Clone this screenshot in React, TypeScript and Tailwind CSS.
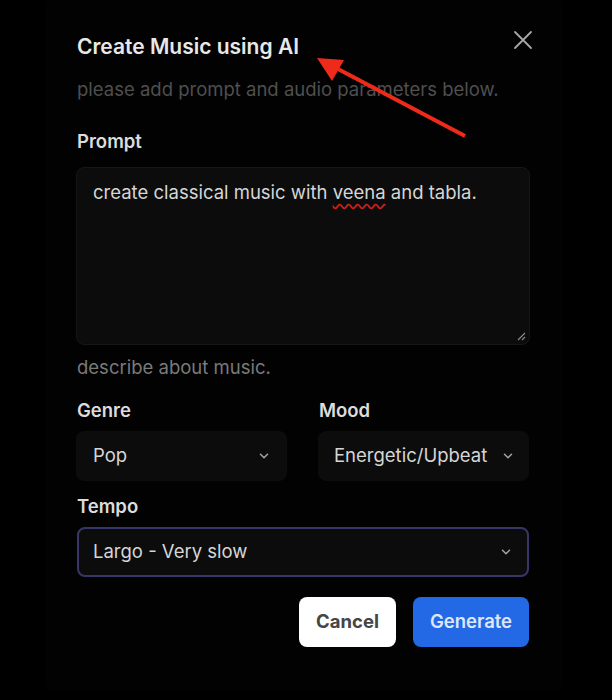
import React from "react";

function Chevron() {
  return (
    <svg width="14" height="14" viewBox="0 0 24 24" fill="none" stroke="#a3a3a3" strokeWidth="2.6" strokeLinecap="round" strokeLinejoin="round">
      <path d="M6 9l6 6 6-6" />
    </svg>
  );
}

function Select({ value, className }: { value: string; className?: string }) {
  return (
    <div className={"flex h-[50px] items-center justify-between rounded-lg bg-[#0c0c0c] text-[18.5px] text-[#d6d6d6] " + (className ?? "")}>
      <span className="whitespace-nowrap">{value}</span>
      <Chevron />
    </div>
  );
}

export default function App() {
  return (
    <div className="relative h-[700px] w-[612px] overflow-hidden bg-black" style={{ fontFamily: "Inter, 'Noto Sans', sans-serif" }}>
      <div className="relative ml-[45px] h-[690px] w-[518px] rounded-lg bg-[#020202] pl-[31px] pr-[32px] pt-[33px]">
        <button className="absolute right-[28px] top-[28px] text-[#a8a8a8]">
          <svg width="24" height="24" viewBox="0 0 24 24" fill="none" stroke="currentColor" strokeWidth="1.8" strokeLinecap="round">
            <path d="M4 4l16 16M20 4L4 20" />
          </svg>
        </button>
        <h2 className="pl-[1px] text-[21px] font-semibold leading-[28px] text-[#e8e8e8]">Create Music using AI</h2>
        <p className="mt-[16px] pl-[1px] text-[18.5px] leading-[24px] text-[#4f4f4f]">please add prompt and audio parameters below.</p>
        <div className="mt-[28px] pl-[1px] text-[18.5px] font-semibold leading-[24px] text-[#dcdcdc]">Prompt</div>
        <div className="relative mt-[14px] h-[178px] w-[454px] rounded-lg border border-[#161616] bg-[#0c0c0c] pl-[16px] pr-4 pt-[12px] text-[18.5px] leading-[24px] text-[#d6d6d6]">
          create classical music with{" "}
          <span className="underline decoration-wavy decoration-[#c81e1e] underline-offset-[4px]">veena</span> and tabla.
          <svg className="absolute bottom-[3px] right-[3px]" width="10" height="10" viewBox="0 0 10 10" stroke="#8a8a8a" strokeWidth="1.2">
            <path d="M9 2L2 9M9 6L6 9" />
          </svg>
        </div>
        <p className="mt-[10px] pl-[1px] text-[18.5px] leading-[24px] text-[#7a7a7a]">describe about music.</p>
        <div className="mt-[19px] grid w-[454px] grid-cols-[211px_211px] gap-x-[31px]">
          <div className="pl-[1px] text-[18.5px] font-semibold leading-[24px] text-[#dcdcdc]">Genre</div>
          <div className="pl-[1px] text-[18.5px] font-semibold leading-[24px] text-[#dcdcdc]">Mood</div>
          <Select value="Pop" className="mt-[9px] pl-[17px] pr-[16px]" />
          <Select value="Energetic/Upbeat" className="mt-[9px] pl-[16px] pr-[14px]" />
        </div>
        <div className="mt-[13px] pl-[1px] text-[18.5px] font-semibold leading-[24px] text-[#dcdcdc]">Tempo</div>
        <Select value="Largo - Very slow" className="ml-[1px] mt-[9px] w-[452px] border-2 border-[#383668] bg-[#0b0b0f] pl-[14px] pr-[14px]" />
        <div className="mt-[20px] flex w-[453px] justify-end gap-[17px]">
          <button className="h-[50px] w-[97px] rounded-lg bg-white text-[18.5px] font-bold text-[#454545]">Cancel</button>
          <button className="h-[50px] w-[116px] rounded-lg bg-[#2369e6] text-[18.5px] font-semibold text-[#dce7fb]">Generate</button>
        </div>
      </div>
      <svg className="pointer-events-none absolute left-0 top-0" width="612" height="700" viewBox="0 0 612 700">
        <line x1="465" y1="136" x2="338" y2="69" stroke="#ee2a1b" strokeWidth="4" />
        <polygon points="317,58 344,60 332,81" fill="#ee2a1b" />
      </svg>
    </div>
  );
}
